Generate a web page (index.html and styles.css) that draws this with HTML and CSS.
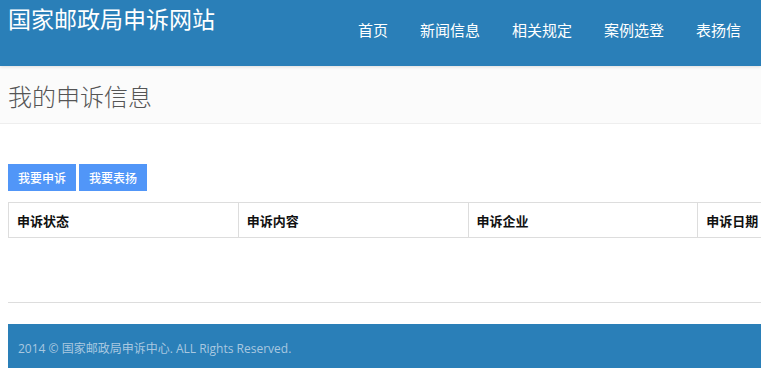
FILE: index.html
```html
<!DOCTYPE html>
<html lang="zh-CN">
<head>
<meta charset="utf-8">
<title>国家邮政局申诉网站</title>
<link rel="stylesheet" href="styles.css">
</head>
<body>
<header class="topbar">
  <div class="brand">国家邮政局申诉网站</div>
  <nav class="nav">
    <a href="#">首页</a>
    <a href="#">新闻信息</a>
    <a href="#">相关规定</a>
    <a href="#">案例选登</a>
    <a href="#">表扬信</a>
  </nav>
</header>
<div class="page-head">
  <h1>我的申诉信息</h1>
</div>
<main class="main">
  <div class="actions">
    <a class="btn" href="#">我要申诉</a>
    <a class="btn" href="#">我要表扬</a>
  </div>
  <table class="grid">
    <thead>
      <tr><th>申诉状态</th><th>申诉内容</th><th>申诉企业</th><th>申诉日期</th></tr>
    </thead>
  </table>
  <hr class="rule">
  <footer class="footer">2014 © 国家邮政局申诉中心. ALL Rights Reserved.</footer>
</main>
</body>
</html>
```

FILE: styles.css
```css
html, body {
  margin: 0;
  padding: 0;
  overflow: hidden;
  background: #fff;
  font-family: "Noto Sans CJK SC", "Open Sans", sans-serif;
}
.topbar {
  height: 66px;
  background: #2a7fb8;
  display: flex;
  justify-content: space-between;
  align-items: flex-start;
  padding: 0 20px 0 8px;
  box-sizing: border-box;
  position: relative;
  z-index: 1;
  box-shadow: 0 1px 3px rgba(0,0,0,0.12);
}
.brand {
  color: #fff;
  font-size: 23px;
  line-height: 26px;
  margin-top: 5px;
}
.nav {
  display: flex;
  gap: 32px;
  margin-top: 19px;
}
.nav a {
  color: #fff;
  text-decoration: none;
  font-size: 15px;
  line-height: 22px;
}
.page-head {
  height: 57px;
  background: #fbfbfb;
  border-bottom: 1px solid #eee;
  display: flex;
  align-items: center;
  padding-left: 8px;
}
.page-head h1 {
  margin: 0;
  font-size: 24px;
  font-weight: 300;
  color: #555;
  line-height: 30px;
  padding-top: 2px;
}
.main {
  width: 920px;
  padding: 40px 8px 0 8px;
}
.actions {
  display: flex;
  gap: 3px;
}
.btn {
  display: block;
  background: #5196f8;
  color: #fff;
  font-size: 12px;
  font-weight: 500;
  line-height: 27px;
  height: 27px;
  padding: 0 10px;
  text-decoration: none;
}
.grid {
  margin-top: 11px;
  width: 920px;
  border-collapse: collapse;
  table-layout: fixed;
}
.grid th {
  border: 1px solid #ddd;
  height: 35px;
  padding: 0 8px;
  text-align: left;
  font-size: 13px;
  font-weight: 700;
  color: #111;
  box-sizing: border-box;
}
.rule {
  margin: 64px 0 0 0;
  border: 0;
  border-top: 1px solid #ddd;
  width: 960px;
}
.footer {
  margin-top: 21px;
  background: #2a7fb8;
  height: 44px;
  width: 960px;
  box-sizing: border-box;
  padding: 17px 10px 0 10px;
  color: #a9c8e0;
  font-family: "Open Sans", "Noto Sans CJK SC", sans-serif;
  font-size: 12px;
  line-height: 16px;
}
```
